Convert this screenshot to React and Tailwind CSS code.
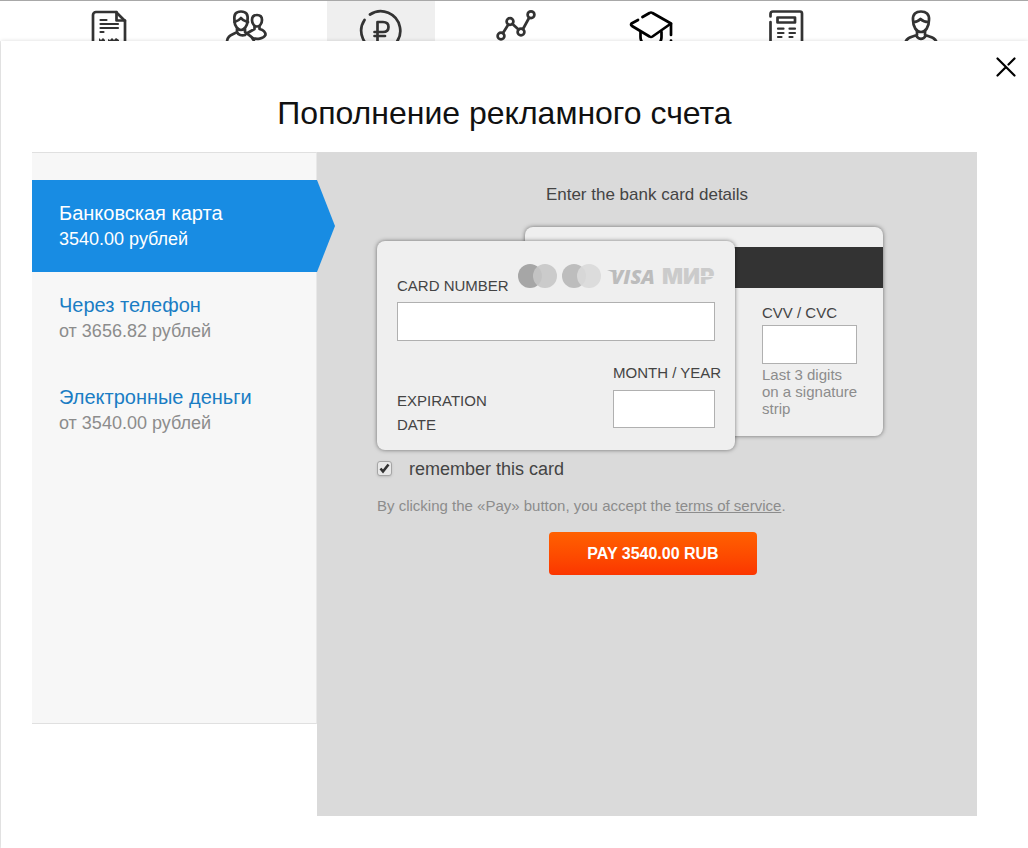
import React, { useState } from 'react';

const methods = [
  { id: 'card', title: 'Банковская карта', price: '3540.00 рублей' },
  { id: 'phone', title: 'Через телефон', price: 'от 3656.82 рублей' },
  { id: 'emoney', title: 'Электронные деньги', price: 'от 3540.00 рублей' },
];

const navItems = [
  {
    label: 'Документы',
    icon: (
      <>
        <path d="M4 40V7a3 3 0 0 1 3-3h20l9 9v27" />
        <path d="M27.500 4v8.500h8.500" />
        <path d="M11.500 12h6M11.500 16h17.500M11.500 20h17.500M11.500 24h3" strokeWidth="2.2" />
        <path d="M10 30l2 2 2-2 2 2v4h-6zM19 31l2 1 2-2 2 2 2-2 3 2v4H19z" fill="currentColor" stroke="none" />
      </>
    ),
  },
  {
    label: 'Клиенты',
    icon: (
      <>
        <path d="M10.500 13c-1-7 1.500-9.500 6.500-9.500s7.500 2.500 6.500 9.500c0 5-3.500 9-6.500 9s-6.500-4-6.500-9z" />
        <path d="M10.500 14c3-1 5-2 6.500-4 2 3 4 3 7 4" />
        <path d="M13 21v3c-4 3-10 3-10 10M21 21v3c3 3 8 4 9 9M13 24c1 3 5 4 8 3" />
        <path d="M28 12c0-3.500 2-5 5-5s5 1.500 5 5c0 4-2.500 6.500-5 6.500s-5-2.500-5-6.500z" />
        <path d="M30.500 18.500v2.500l-7 4M35.500 18.500v2.500c4 1 6 3.500 6 6-2 4-9 4.500-13 3" />
      </>
    ),
  },
  {
    label: 'Финансы',
    icon: (
      <>
        <path d="M11 6.500A19.500 19.500 0 1 1 5.500 12" />
        <path d="M18.500 36V14H24c3.500 0 5.500 2 5.500 5s-2 5-5.500 5h-8.500M15.500 28H26" />
      </>
    ),
  },
  {
    label: 'Статистика',
    icon: (
      <>
        <circle cx="7" cy="28" r="3.400" />
        <circle cx="16" cy="13.500" r="3.400" />
        <circle cx="27" cy="24" r="3.400" />
        <circle cx="37" cy="6.700" r="3.400" />
        <path d="M9 25l5-8M18.500 16l6 5.500M29 21l6-11" />
      </>
    ),
  },
  {
    label: 'Обучение',
    dark: true,
    icon: (
      <>
        <path d="M13.500 9l7-4q1.500-1 3 0L42 15.500 23.500 28.500q-1.500 1-3 0L3 18q-1.500-1-.5-2.500L9 12" />
        <path d="M42 16v11M42 32.500v2M11.500 24v5q0 4 3 7M32.500 24v5q0 4-3 7" />
      </>
    ),
  },
  {
    label: 'Новости',
    icon: (
      <>
        <path d="M6.500 8.500V6q0-2.500 2.500-2.500h27q2 0 2 2V40M6.500 14v26" />
        <path d="M13.500 9.500h17.500v5H13.500z" />
        <path d="M14 20.700h5.500M25.500 20.700h5.500M14 25h5.500M25.500 25h5.500M14 29h3.500M25.500 29h3" strokeWidth="2.2" />
      </>
    ),
  },
  {
    label: 'Профиль',
    icon: (
      <>
        <path d="M14 12c-.5-6 3-8.500 8-8.500s8.500 2.500 8 8.500c0 7-3.500 12-8 12s-8-5-8-12z" />
        <path d="M14.500 14c3 0 5-1 7-3 2 2 5 3 8 3" />
        <path d="M18 23v4c-5 2-10 2-11.500 7M26 23v4c5 2 10 2 11.500 7M17 27.500c3 4.500 7 4.500 10 0" />
      </>
    ),
  },
];

function TopNav({ active }) {
  return (
    <nav className="flex h-[41px] justify-between overflow-hidden border-t border-[#a8a8a8] bg-white pr-[53px] pl-[57px]">
      {navItems.map((item, i) => (
        <a
          key={item.label}
          href="#"
          aria-label={item.label}
          className={`flex h-16 w-[108px] justify-center pt-[7px] ${i === active ? 'bg-[#efefef]' : ''} ${item.dark ? 'text-black' : 'text-[#333]'}`}
        >
          <svg width="44" height="44" viewBox="0 0 44 44" fill="none" stroke="currentColor" strokeWidth="2.7" strokeLinecap="round" strokeLinejoin="round">
            {item.icon}
          </svg>
        </a>
      ))}
    </nav>
  );
}

function CardLogos() {
  return (
    <svg width="200" height="28" viewBox="0 0 200 28" aria-hidden="true">
      <circle cx="15" cy="14" r="12" fill="#a6a6a6" />
      <circle cx="30" cy="14" r="12" fill="#c6c6c6" fillOpacity="0.9" />
      <circle cx="59" cy="14" r="12" fill="#bdbdbd" />
      <circle cx="74" cy="14" r="12" fill="#d9d9d9" fillOpacity="0.9" />
      <text x="96" y="22" fill="#bcbcbc" fontFamily="Open Sans" fontSize="20" fontWeight="800" fontStyle="italic">VISA</text>
      <path d="M92 8h8l2 4z" fill="#bcbcbc" />
      <text x="147" y="22" fill="#cbcbcb" fontFamily="Inter" fontSize="22" fontWeight="900">МИР</text>
      <path d="M185 14.500h15" stroke="#efefef" />
    </svg>
  );
}

function MethodList({ selected, onSelect }) {
  return (
    <div className="h-[572px] w-[285px] shrink-0 border-y border-r border-y-[#e0e0e0] border-r-[#e8e8e8] bg-[#f7f7f7] pt-[27px]">
      {methods.map((m) => {
        const active = m.id === selected;
        return (
          <button
            key={m.id}
            type="button"
            onClick={() => onSelect(m.id)}
            className={`relative block h-[92px] w-[285px] pl-[27px] text-left ${active ? 'z-10 bg-[#188ce3] text-white' : 'text-[#1a7dc4]'}`}
          >
            <span className="block text-[20px] leading-[26px]">{m.title}</span>
            <span className={`block text-[18px] leading-[26px] ${active ? '' : 'text-[#8c8c8c]'}`}>{m.price}</span>
            {active && (
              <svg className="absolute top-0 left-full" width="18" height="92" viewBox="0 0 18 92">
                <path d="M0 0l18 46L0 92z" fill="#188ce3" />
              </svg>
            )}
          </button>
        );
      })}
    </div>
  );
}

const inputClass = 'block border border-[#b0b0b0] bg-white px-2 text-[18px] outline-none';

function CardForm() {
  const [remember, setRemember] = useState(true);

  return (
    <form className="min-h-[664px] flex-1 bg-[#dadada] pt-[31px]" onSubmit={(e) => e.preventDefault()}>
      <h2 className="text-center text-[17px] leading-6 text-[#444]">Enter the bank card details</h2>
      <div className="mx-auto w-[540px]">
        <div className="mt-5 flex items-start">
          {/* Front side */}
          <div className="z-10 mt-[14px] h-[209px] w-[358px] rounded-lg bg-[#efefef] px-5 pt-[21px] shadow-[0_0_4px_rgba(0,0,0,0.5)]">
            <div className="flex h-10 items-start justify-between">
              <label htmlFor="number" className="pt-3 text-[15px] leading-6 whitespace-nowrap text-[#444]">CARD NUMBER</label>
              <CardLogos />
            </div>
            <input id="number" className={`${inputClass} h-[39px] w-full`} />
            <div className="mt-5 flex items-start justify-between">
              <label htmlFor="expiry" className="w-[110px] pt-7 text-[15px] leading-6 text-[#444]">EXPIRATION DATE</label>
              <div className="w-[102px]">
                <label htmlFor="expiry" className="mb-[5px] block text-[15px] leading-6 whitespace-nowrap text-[#444]">MONTH / YEAR</label>
                <input id="expiry" className={`${inputClass} h-[38px] w-full`} />
              </div>
            </div>
          </div>

          {/* Back side */}
          <div className="-ml-[210px] h-[209px] w-[358px] rounded-lg bg-[#efefef] pt-5 shadow-[0_0_4px_rgba(0,0,0,0.5)]">
            <div className="h-[41px] bg-[#333]" />
            <div className="ml-[237px] w-[95px] pt-[13px]">
              <label htmlFor="cvc" className="block text-[15px] leading-6 text-[#444]">CVV / CVC</label>
              <input id="cvc" className={`${inputClass} h-[39px] w-full`} />
              <p className="mt-[2px] text-[15px] leading-[17px] whitespace-nowrap text-[#8c8c8c]">
                Last 3 digits <br />
                on a signature <br />
                strip
              </p>
            </div>
          </div>
        </div>

        <label className="mt-[7px] flex items-center gap-4 text-[18px] leading-6 text-[#444]">
          <span className="relative block size-4">
            <input
              type="checkbox"
              checked={remember}
              onChange={(e) => setRemember(e.target.checked)}
              className="peer block size-[15px] appearance-none rounded-[3px] border border-[#a5a5a5] bg-[#e8e8e8] shadow-sm"
            />
            <svg className="pointer-events-none absolute top-0 left-0 hidden peer-checked:block" width="15" height="15" viewBox="0 0 15 15">
              <path d="M3.500 7.500l2.500 3 5.500-7" fill="none" stroke="#333" strokeWidth="2.6" />
            </svg>
          </span>
          remember this card
        </label>

        <p className="mt-[13px] text-[15px] leading-6 text-[#8c8c8c]">
          By clicking the «Pay» button, you accept the <a href="#" className="underline">terms of service</a>.
        </p>

        <div className="mt-[14px] flex justify-center pl-3">
          <button type="submit" className="h-[43px] w-[208px] rounded bg-linear-to-b from-[#ff6000] to-[#fb3500] text-[16px] font-bold text-white">
            PAY 3540.00 RUB
          </button>
        </div>
      </div>
    </form>
  );
}

export default function App() {
  const [selected, setSelected] = useState('card');

  return (
    <div className="flex min-h-screen flex-col bg-[#f0f0f0] font-['Liberation_Sans',Arial,sans-serif]">
      <TopNav active={2} />
      <main className="relative ml-px flex-1 bg-white pr-[51px] pb-8 pl-[31px] shadow-[0_0_4px_rgba(0,0,0,0.15)]">
        <button type="button" aria-label="Закрыть" className="absolute top-[16px] right-[12px]">
          <svg width="20" height="20" viewBox="0 0 20 20" fill="none" stroke="#000" strokeWidth="2.2" strokeLinecap="round">
            <path d="M1.500 1.500l17 17M1.500 18.500l8-8M12.500 7.500l6-6" />
          </svg>
        </button>
        <h1 className="pt-[52px] text-center text-[32px] leading-10 text-[#111]">Пополнение рекламного счета</h1>
        <div className="mt-[19px] flex items-start">
          <MethodList selected={selected} onSelect={setSelected} />
          <CardForm />
        </div>
      </main>
    </div>
  );
}
